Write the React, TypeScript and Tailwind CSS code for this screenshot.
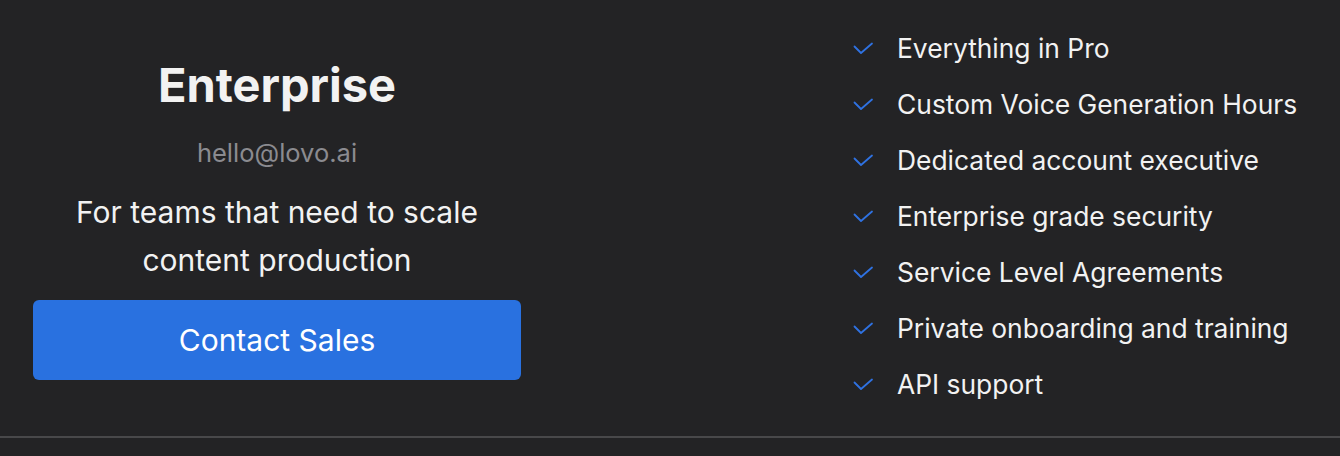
const features = [
  "Everything in Pro",
  "Custom Voice Generation Hours",
  "Dedicated account executive",
  "Enterprise grade security",
  "Service Level Agreements",
  "Private onboarding and training",
  "API support",
];

function Check() {
  return (
    <svg width="22" height="14" viewBox="0 0 22 14" fill="none" className="shrink-0">
      <path d="M2.5 4.5 L9 11 L20 1.5" stroke="#2f72e2" strokeWidth="1.8" strokeLinecap="round" strokeLinejoin="round" />
    </svg>
  );
}

export default function App() {
  return (
    <div className="min-h-[456px] w-[1340px] bg-[#232325] font-['Inter',sans-serif]">
      <section className="flex h-[438px] border-b-2 border-[#48484a] pl-[33px]">
        {/* plan summary */}
        <div className="flex w-[488px] flex-col items-center pt-[57px] text-center">
          <h2 className="text-[47px] font-bold leading-[56px] text-[#f2f2f2]">Enterprise</h2>
          <p className="mt-[24px] text-[25.5px] leading-[32px] text-[#8b8b90]">hello@lovo.ai</p>
          <p className="mt-[19px] text-[30px] leading-[48px] text-[#f2f2f2]">
            For teams that need to scale
            <br />
            content production
          </p>
          <button className="mt-[16px] h-[80px] w-full rounded-[6px] bg-[#2971e0] text-[30px] text-white">
            Contact Sales
          </button>
        </div>

        {/* feature list */}
        <ul className="ml-[331px] pt-[21px]">
          {features.map((f) => (
            <li key={f} className="flex h-[56px] items-center gap-[23px]">
              <Check />
              <span className="text-[26.4px] text-[#f2f2f2]">{f}</span>
            </li>
          ))}
        </ul>
      </section>
    </div>
  );
}
